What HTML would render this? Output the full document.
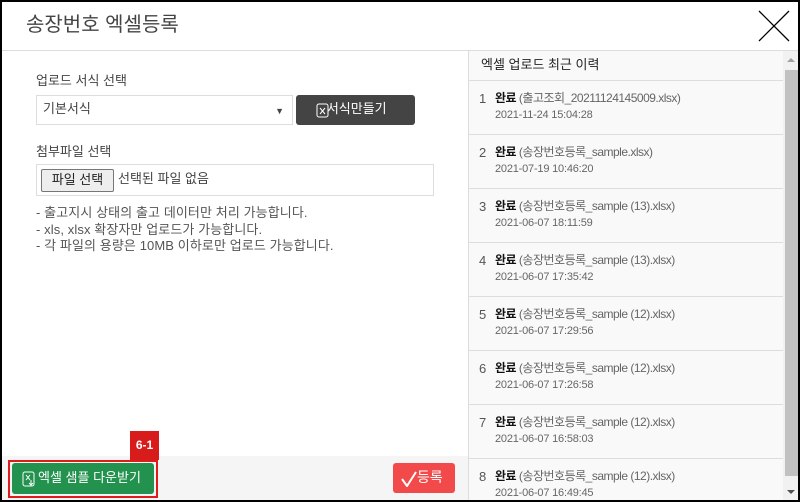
<!DOCTYPE html>
<html><head><meta charset="utf-8"><style>
*{margin:0;padding:0;box-sizing:border-box}
body{width:800px;height:502px;background:#000;position:relative;overflow:hidden;font-family:"Liberation Sans","Noto Sans CJK KR",sans-serif;color:#333}
.win{position:absolute;left:2px;top:2px;width:796px;height:498px;background:#fff;overflow:hidden}
.title{position:absolute;left:24px;top:10px;font-size:20px;line-height:26px;color:#444}
.hr{position:absolute;left:0;top:48px;width:796px;height:1px;background:#ddd}
.x{position:absolute;left:756px;top:8px}
.lbl{position:absolute;font-size:13px;line-height:16px;color:#444}
.sel{position:absolute;left:34px;top:93px;width:257px;height:30px;border:1px solid #ddd;font-size:13px;line-height:16px;padding:5px 6px;color:#444}
.sel span{position:absolute;right:8px;top:7px;font-size:9px}
.dbtn{position:absolute;left:294px;top:93px;width:119px;height:30px;background:#444;border-radius:3px;color:#fff;font-size:13px;line-height:16px;padding:6px 0 0 20px}
.file{position:absolute;left:34px;top:162px;width:398px;height:32px;border:1px solid #ddd;font-size:13px;line-height:16px;color:#444}
.file b{position:absolute;left:4px;top:4px;width:73px;height:23px;border:1px solid #777;border-radius:2px;background:#eee;font-weight:normal;text-align:center;line-height:20px;color:#222}
.file i{position:absolute;left:81px;top:6px;font-style:normal}
.notes{position:absolute;left:34px;top:203px;font-size:13px;line-height:16.5px;color:#555;letter-spacing:.1px}
.foot{position:absolute;left:0;top:454px;width:466px;height:44px;background:#f5f5f5}
.green{position:absolute;left:10px;top:461px;width:142px;height:31px;background:#22924e;border-radius:3px;color:#fff;font-size:13px;line-height:16px;padding:7px 0 0 26px}
.redbox{position:absolute;left:6px;top:458px;width:150px;height:38px;border:2px solid #e01b1b}
.tag{position:absolute;left:128px;top:429px;width:29px;height:29px;background:#d81b1b;color:#fff;font-size:12px;font-weight:bold;text-align:center;line-height:29px}
.red{position:absolute;left:391px;top:461px;width:62px;height:30px;background:#f24a4a;border-radius:3px;color:#fff;font-size:14px;line-height:16px;padding:6px 0 0 24px}
.panel{position:absolute;left:466px;top:49px;width:315px;height:449px;background:#f9f9f9;border-left:1px solid #ddd}
.ph{height:30px;border-bottom:1px solid #ddd;font-size:13px;line-height:16px;padding:6px 0 0 12px;color:#222}
.row{height:54px;border-bottom:1px solid #ddd;position:relative;font-size:12px;line-height:14px;letter-spacing:-.5px}
.row .n{position:absolute;left:10px;top:11px;color:#555;font-size:13px}
.row .t{position:absolute;left:26px;top:10px;color:#666}
.row .t b{color:#111;font-weight:bold}
.row .d{position:absolute;left:26px;top:27px;color:#666;font-size:11px;letter-spacing:-.2px}
.sb{position:absolute;left:781px;top:49px;width:15px;height:449px;background:#f1f1f1}
.th{position:absolute;left:783px;top:68px;width:13px;height:406px;background:#c1c1c1}
</style></head><body><div class="win">
<div class="title">송장번호 엑셀등록</div>
<svg class="x" width="32" height="32"><path d="M1 1L31 31M31 1L1 31" stroke="#000" stroke-width="1.3"/></svg>
<div class="hr"></div>
<div class="lbl" style="left:34px;top:71px">업로드 서식 선택</div>
<div class="sel">기본서식<span>▼</span></div>
<div class="dbtn"><svg style="position:absolute;left:20px;top:8px" width="14" height="15"><rect x="1" y="1" width="11" height="13" rx="2" fill="none" stroke="#fff"/><path d="M4 5l5 6M9 5l-5 6" stroke="#fff"/></svg>&nbsp;&nbsp;&nbsp;서식만들기</div>
<div class="lbl" style="left:34px;top:142px">첨부파일 선택</div>
<div class="file"><b>파일 선택</b><i>선택된 파일 없음</i></div>
<div class="notes">- 출고지시 상태의 출고 데이터만 처리 가능합니다.<br>- xls, xlsx 확장자만 업로드가 가능합니다.<br>- 각 파일의 용량은 10MB 이하로만 업로드 가능합니다.</div>
<div class="foot"></div>
<div class="green"><svg style="position:absolute;left:10px;top:8px" width="14" height="16"><rect x="1" y="1" width="11" height="14" rx="2" fill="none" stroke="#fff"/><path d="M4 4l4 5M8 4l-4 5M9 9v5M7 12l2 2 2-2" stroke="#fff" fill="none"/></svg>엑셀 샘플 다운받기</div>
<div class="redbox"></div>
<div class="tag">6-1</div>
<div class="red"><svg style="position:absolute;left:8px;top:8px" width="16" height="16"><path d="M1 8l5 7L15 1" stroke="#fff" stroke-width="2" fill="none"/></svg>등록</div>
<div class="panel"><div class="ph">엑셀 업로드 최근 이력</div>
<div class="row"><span class="n">1</span><span class="t"><b>완료</b> (출고조회_20211124145009.xlsx)</span><span class="d">2021-11-24 15:04:28</span></div>
<div class="row"><span class="n">2</span><span class="t"><b>완료</b> (송장번호등록_sample.xlsx)</span><span class="d">2021-07-19 10:46:20</span></div>
<div class="row"><span class="n">3</span><span class="t"><b>완료</b> (송장번호등록_sample (13).xlsx)</span><span class="d">2021-06-07 18:11:59</span></div>
<div class="row"><span class="n">4</span><span class="t"><b>완료</b> (송장번호등록_sample (13).xlsx)</span><span class="d">2021-06-07 17:35:42</span></div>
<div class="row"><span class="n">5</span><span class="t"><b>완료</b> (송장번호등록_sample (12).xlsx)</span><span class="d">2021-06-07 17:29:56</span></div>
<div class="row"><span class="n">6</span><span class="t"><b>완료</b> (송장번호등록_sample (12).xlsx)</span><span class="d">2021-06-07 17:26:58</span></div>
<div class="row"><span class="n">7</span><span class="t"><b>완료</b> (송장번호등록_sample (12).xlsx)</span><span class="d">2021-06-07 16:58:03</span></div>
<div class="row"><span class="n">8</span><span class="t"><b>완료</b> (송장번호등록_sample (12).xlsx)</span><span class="d">2021-06-07 16:49:45</span></div>
</div>
<div class="sb"></div><div class="th"></div>
<div style="position:absolute;left:785px;top:56px;width:0;height:0;border:4px solid transparent;border-bottom:4px solid #a0a0a0;border-top:0"></div>
<div style="position:absolute;left:785px;top:488px;width:0;height:0;border:4px solid transparent;border-top:4px solid #505050;border-bottom:0"></div>
</div></body></html>
